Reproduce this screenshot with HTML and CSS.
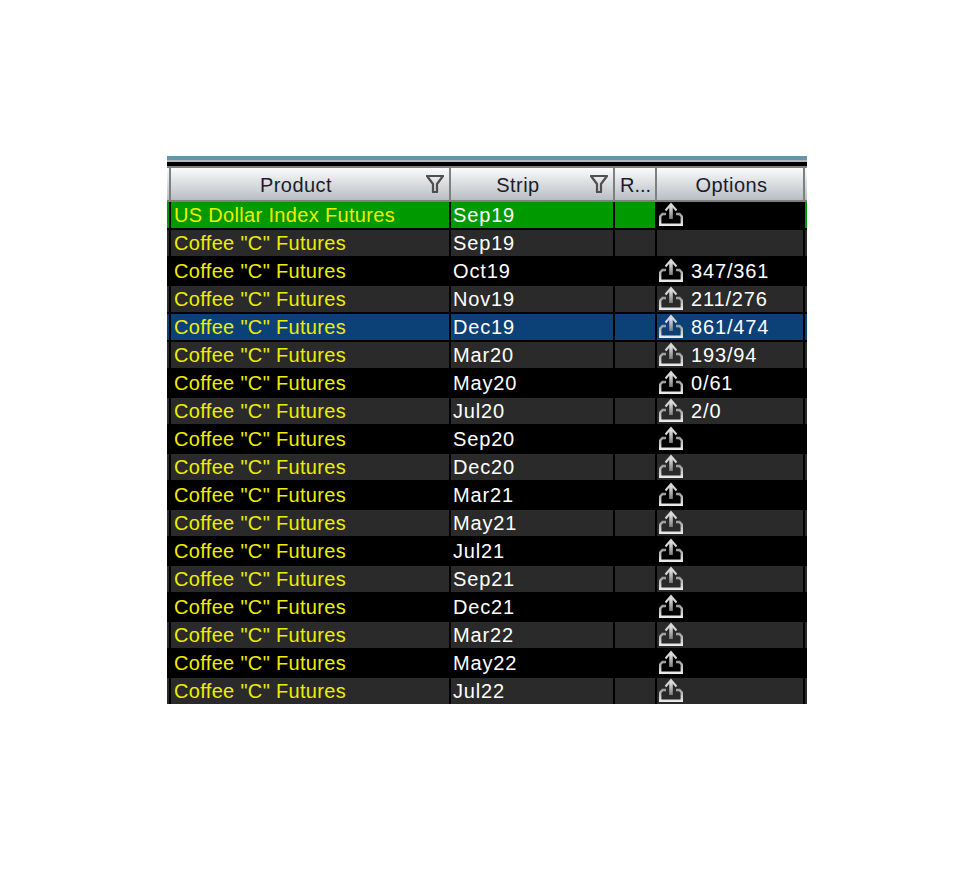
FILE: index.html
```html
<!DOCTYPE html>
<html lang="en">
<head>
<meta charset="utf-8">
<title>Futures grid</title>
<link rel="stylesheet" href="styles.css">
</head>
<body>
<svg class="defs" width="0" height="0" aria-hidden="true">
  <defs>
    <linearGradient id="trayNormal" gradientUnits="userSpaceOnUse" x1="0" y1="11" x2="0" y2="24">
      <stop offset="0" stop-color="#9a9a9a"/>
      <stop offset="1" stop-color="#f0f0f0"/>
    </linearGradient>
    <linearGradient id="shaft" gradientUnits="userSpaceOnUse" x1="0" y1="2" x2="0" y2="17">
      <stop offset="0" stop-color="#f2f2f2"/>
      <stop offset="1" stop-color="#7f7f7f"/>
    </linearGradient>
    <symbol id="share" viewBox="0 0 24 24">
      <path d="M7 12H3.500L1.200 14.500V22.800H22.800V14.500L20.500 12H17" fill="none" stroke="url(#trayNormal)" stroke-width="2.400"/>
      <path d="M12 17V3" fill="none" stroke="url(#shaft)" stroke-width="3.600"/>
      <path d="M6.500 8.500L12 2L17.500 8.500" fill="none" stroke="#d8d8d8" stroke-width="2"/>
    </symbol>
    <symbol id="funnel" viewBox="0 0 18 18">
      <path d="M1 1H17L11 9V17H7V9Z" fill="none" stroke="#4f4f4f" stroke-width="2.200" stroke-linejoin="round"/>
    </symbol>
  </defs>
</svg>

<div class="panel">
  <div class="topbar"></div>
  <div class="head">
    <div class="hcell edge"></div>
    <div class="hcell"><span class="hlabel">Product</span><svg class="filter"><use href="#funnel"/></svg></div>
    <div class="hcell"><span class="hlabel">Strip</span><svg class="filter"><use href="#funnel"/></svg></div>
    <div class="hcell start"><span class="hlabel">R...</span></div>
    <div class="hcell options"><span class="hlabel">Options</span></div>
    <div class="hcell edge"></div>
  </div>
  <div class="rows">
    <div class="row active"><i></i><div class="prod">US Dollar Index Futures</div><div class="strip">Sep19</div><div></div><div class="opt dark"><svg class="share"><use href="#share"/></svg></div><i></i></div>
    <div class="row alt"><i></i><div class="prod">Coffee "C" Futures</div><div class="strip">Sep19</div><div></div><div class="opt"></div><i></i></div>
    <div class="row"><i></i><div class="prod">Coffee "C" Futures</div><div class="strip">Oct19</div><div></div><div class="opt"><svg class="share"><use href="#share"/></svg><span>347/361</span></div><i></i></div>
    <div class="row alt"><i></i><div class="prod">Coffee "C" Futures</div><div class="strip">Nov19</div><div></div><div class="opt"><svg class="share"><use href="#share"/></svg><span>211/276</span></div><i></i></div>
    <div class="row selected"><i></i><div class="prod">Coffee "C" Futures</div><div class="strip">Dec19</div><div></div><div class="opt"><svg class="share"><use href="#share"/></svg><span>861/474</span></div><i></i></div>
    <div class="row alt"><i></i><div class="prod">Coffee "C" Futures</div><div class="strip">Mar20</div><div></div><div class="opt"><svg class="share"><use href="#share"/></svg><span>193/94</span></div><i></i></div>
    <div class="row"><i></i><div class="prod">Coffee "C" Futures</div><div class="strip">May20</div><div></div><div class="opt"><svg class="share"><use href="#share"/></svg><span>0/61</span></div><i></i></div>
    <div class="row alt"><i></i><div class="prod">Coffee "C" Futures</div><div class="strip">Jul20</div><div></div><div class="opt"><svg class="share"><use href="#share"/></svg><span>2/0</span></div><i></i></div>
    <div class="row"><i></i><div class="prod">Coffee "C" Futures</div><div class="strip">Sep20</div><div></div><div class="opt"><svg class="share"><use href="#share"/></svg></div><i></i></div>
    <div class="row alt"><i></i><div class="prod">Coffee "C" Futures</div><div class="strip">Dec20</div><div></div><div class="opt"><svg class="share"><use href="#share"/></svg></div><i></i></div>
    <div class="row"><i></i><div class="prod">Coffee "C" Futures</div><div class="strip">Mar21</div><div></div><div class="opt"><svg class="share"><use href="#share"/></svg></div><i></i></div>
    <div class="row alt"><i></i><div class="prod">Coffee "C" Futures</div><div class="strip">May21</div><div></div><div class="opt"><svg class="share"><use href="#share"/></svg></div><i></i></div>
    <div class="row"><i></i><div class="prod">Coffee "C" Futures</div><div class="strip">Jul21</div><div></div><div class="opt"><svg class="share"><use href="#share"/></svg></div><i></i></div>
    <div class="row alt"><i></i><div class="prod">Coffee "C" Futures</div><div class="strip">Sep21</div><div></div><div class="opt"><svg class="share"><use href="#share"/></svg></div><i></i></div>
    <div class="row"><i></i><div class="prod">Coffee "C" Futures</div><div class="strip">Dec21</div><div></div><div class="opt"><svg class="share"><use href="#share"/></svg></div><i></i></div>
    <div class="row alt"><i></i><div class="prod">Coffee "C" Futures</div><div class="strip">Mar22</div><div></div><div class="opt"><svg class="share"><use href="#share"/></svg></div><i></i></div>
    <div class="row"><i></i><div class="prod">Coffee "C" Futures</div><div class="strip">May22</div><div></div><div class="opt"><svg class="share"><use href="#share"/></svg></div><i></i></div>
    <div class="row alt"><i></i><div class="prod">Coffee "C" Futures</div><div class="strip">Jul22</div><div></div><div class="opt"><svg class="share"><use href="#share"/></svg></div><i></i></div>
  </div>
</div>
</body>
</html>
```

FILE: styles.css
```css
html, body {
  margin: 0;
  padding: 0;
  background: #fff;
}

body {
  padding: 156px 0 0 167px;
  font-family: "Liberation Sans", Arial, sans-serif;
  font-size: 20px;
}

.defs {
  display: block;
  width: 0;
  height: 0;
  overflow: hidden;
}

.panel {
  width: 640px;
  height: 548px;
  overflow: hidden;
  background: #000;
}

.topbar {
  height: 4px;
  background: #6694a9;
  border-bottom: 2px solid #b2b9bd;
  margin-bottom: 4px;
}

.head,
.row {
  display: grid;
  grid-template-columns: 2px 278px 162px 40px 146px 2px;
  column-gap: 2px;
}

.head {
  padding: 2px 0;
  background: #7f7f7f;
}

.hcell {
  height: 32px;
  display: flex;
  align-items: center;
  background: linear-gradient(#fbfbfb, #b7bec3);
  color: #1c1c2a;
}

.hlabel {
  flex: 1;
  padding-top: 2px;
  text-align: center;
  letter-spacing: 0.45px;
}

.start .hlabel {
  padding-left: 5px;
  text-align: left;
  letter-spacing: 0;
}

.options {
  padding-left: 3px;
}

.filter {
  width: 18px;
  height: 18px;
  margin: 0 5px;
  flex: none;
}

.row {
  height: 26px;
  margin-bottom: 2px;
  color: #fff;
  line-height: 26px;
}

.row.alt > * {
  background: #2a2a2a;
}

.row.active > * {
  background: #009900;
}

.row.selected > * {
  background: #0b4176;
}

.row.active > .dark {
  background: #000;
}

.prod {
  padding-left: 3px;
  color: #eeee00;
  white-space: nowrap;
  letter-spacing: 0.33px;
}

.strip {
  padding-left: 2px;
  letter-spacing: 0.85px;
}

.opt {
  display: flex;
  align-items: flex-start;
  padding-left: 2px;
}

.share {
  width: 24px;
  height: 24px;
  flex: none;
}

.opt span {
  margin-left: 8px;
  letter-spacing: 0.85px;
}
```
